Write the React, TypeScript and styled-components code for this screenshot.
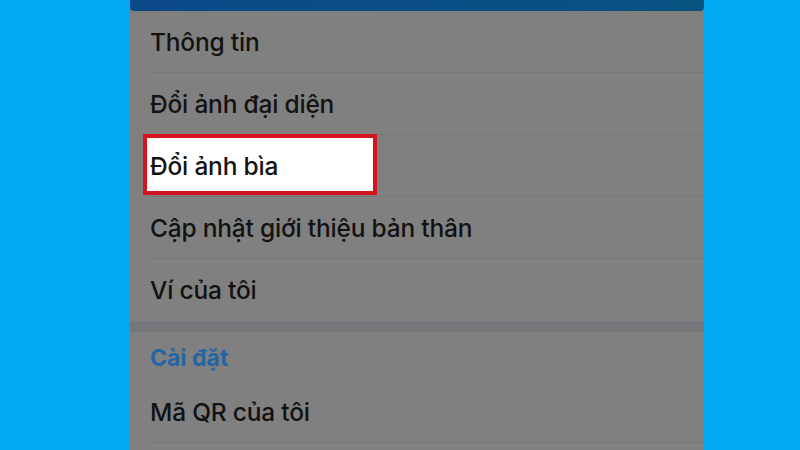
import React from "react";
import styled, { createGlobalStyle } from "styled-components";

const GlobalStyle = createGlobalStyle`
  html, body {
    margin: 0;
    padding: 0;
    background: #02a8f1;
  }
  body {
    font-family: "Inter", "Noto Sans", sans-serif;
  }
`;

const Page = styled.div`
  width: 800px;
  height: 450px;
  overflow: hidden;
  padding-left: 130px;
  box-sizing: border-box;
`;

const Panel = styled.div`
  width: 574px;
  height: 450px;
  background: #808080;
  display: flex;
  flex-direction: column;
`;

const TopBar = styled.div`
  height: 11px;
  flex-shrink: 0;
  background: linear-gradient(90deg, #0b4888, #085482);
  border-radius: 0 0 4px 4px;
`;

const Row = styled.div<{ $divider: boolean }>`
  position: relative;
  flex-shrink: 0;
  height: 62px;
  margin-left: 20px;
  display: flex;
  align-items: center;
  box-sizing: border-box;
  border-bottom: 1px solid ${(p) => (p.$divider ? "#777777" : "transparent")};
`;

const Label = styled.span`
  position: relative;
  z-index: 1;
  font-size: 24.5px;
  font-weight: 500;
  color: #121212;
  letter-spacing: -0.2px;
`;

// red annotation box drawn over the row
const Highlight = styled.div`
  position: absolute;
  left: -7px;
  top: -1px;
  width: 234px;
  height: 61px;
  box-sizing: border-box;
  background: #ffffff;
  border: 4px solid #d4141c;
`;

const SectionGap = styled.div`
  height: 11px;
  flex-shrink: 0;
  background: #76777a;
`;

const SectionTitle = styled.div`
  height: 49px;
  flex-shrink: 0;
  display: flex;
  align-items: center;
  padding-left: 20px;
  padding-top: 2px;
  box-sizing: border-box;
  font-size: 23px;
  font-weight: 700;
  color: #2565a4;
`;

const items = [
  "Thông tin",
  "Đổi ảnh đại diện",
  "Đổi ảnh bìa",
  "Cập nhật giới thiệu bản thân",
  "Ví của tôi",
];

function Item({ text, marked, divider = true }: { text: string; marked?: boolean; divider?: boolean }) {
  return (
    <Row $divider={divider}>
      {marked && <Highlight />}
      <Label>{text}</Label>
    </Row>
  );
}

export default function App() {
  return (
    <>
      <GlobalStyle />
      <Page>
        <Panel>
          <TopBar />
          {items.map((t, i) => (
            <Item key={t} text={t} marked={i === 2} divider={i !== items.length - 1} />
          ))}
          <SectionGap />
          <SectionTitle>Cài đặt</SectionTitle>
          <Item text="Mã QR của tôi" />
        </Panel>
      </Page>
    </>
  );
}
